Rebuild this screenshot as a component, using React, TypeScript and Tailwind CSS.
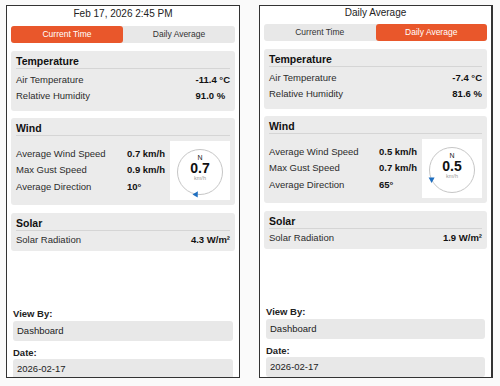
type PanelProps = {
  title: string;
  titleH: "tall" | "short";
  active: "current" | "daily";
  temp: string;
  humidity: string;
  avgSpeed: string;
  gust: string;
  direction: number;
  speed: string;
  markerRot: number;
  solar: string;
  thickRight?: boolean;
};

function Compass({ direction, speed, markerRot }: { direction: number; speed: string; markerRot: number }) {
  const cx = 30;
  const cy = 31;
  const r = 22.5;
  const p = ((direction + 180) * Math.PI) / 180;
  const mx = cx + r * Math.sin(p);
  const my = cy - r * Math.cos(p);
  return (
    <div className="w-[60px] h-[59px] bg-white ml-[5px] shrink-0">
      <svg width="60" height="59" viewBox="0 0 60 59">
        <circle cx={cx} cy={cy} r={r} fill="none" stroke="#c6c6c6" strokeWidth="1" />
        <text x="30" y="18.5" textAnchor="middle" fontSize="7" fill="#222" fontFamily="Liberation Sans, Arial, sans-serif">
          N
        </text>
        <text x="30" y="31.5" textAnchor="middle" fontSize="14" fontWeight="bold" fill="#111" fontFamily="Liberation Sans, Arial, sans-serif">
          {speed}
        </text>
        <text x="30" y="38.5" textAnchor="middle" fontSize="5.5" fill="#9a9a9a" fontFamily="Liberation Sans, Arial, sans-serif">
          km/h
        </text>
        <polygon
          points="0,-3.5 3,2 -3,2"
          fill="#1f6fc0"
          transform={`translate(${mx} ${my}) rotate(${markerRot})`}
        />
      </svg>
    </div>
  );
}

function Card({ heading, children, className }: { heading: string; children: React.ReactNode; className: string }) {
  return (
    <div className={`rounded-[3px] bg-[#ebebeb] px-[5px] pt-[4px] ${className}`}>
      <div className="h-[14px] leading-[13px] text-[10.5px] font-bold text-[#111] border-b border-[#d5d5d5]">
        {heading}
      </div>
      {children}
    </div>
  );
}

function Panel(props: PanelProps) {
  const isCurrent = props.active === "current";
  return (
    <div
      className={`w-[234px] h-[373px] bg-white border border-[#333] overflow-hidden px-[4px] ${
        props.thickRight ? "border-r-2" : ""
      }`}
    >
      <div
        className={`text-center text-[10px] text-[#222] ${
          props.titleH === "tall" ? "h-[16px] leading-[16px]" : "h-[14px] leading-[14px]"
        }`}
      >
        {props.title}
      </div>

      {/* segmented control */}
      <div className="mt-[4px] h-[17px] flex rounded-[3px] bg-[#e8e8e8] text-[8.5px]">
        <div
          className={`flex-1 flex items-center justify-center rounded-[3px] ${
            isCurrent ? "bg-[#e9572b] text-white" : "text-[#333]"
          }`}
        >
          Current Time
        </div>
        <div
          className={`flex-1 flex items-center justify-center rounded-[3px] ${
            !isCurrent ? "bg-[#e9572b] text-white" : "text-[#333]"
          }`}
        >
          Daily Average
        </div>
      </div>

      <Card heading="Temperature" className="mt-[8px] pb-[7px]">
        <div className="pt-[3px] grid grid-cols-[1fr_auto] text-[9.5px] leading-[16px]">
          <span className="text-[#2b2b2b]">Air Temperature</span>
          <span className="font-bold text-[#111]">{props.temp}</span>
          <span className="text-[#2b2b2b]">Relative Humidity</span>
          <span className="font-bold text-[#111]">{props.humidity}</span>
        </div>
      </Card>

      <Card heading="Wind" className="mt-[7px] pb-[5px]">
        <div className="pt-[5px] flex items-center">
          <div className="flex-1 grid grid-cols-[1fr_auto] text-[9.5px] leading-[16.5px]">
            <span className="text-[#2b2b2b]">Average Wind Speed</span>
            <span className="font-bold text-[#111]">{props.avgSpeed}</span>
            <span className="text-[#2b2b2b]">Max Gust Speed</span>
            <span className="font-bold text-[#111]">{props.gust}</span>
            <span className="text-[#2b2b2b]">Average Direction</span>
            <span className="font-bold text-[#111]">{props.direction}°</span>
          </div>
          <Compass direction={props.direction} speed={props.speed} markerRot={props.markerRot} />
        </div>
      </Card>

      <Card heading="Solar" className="mt-[8px] pb-[3px]">
        <div className="pt-[1px] flex justify-between text-[9.5px] leading-[16px]">
          <span className="text-[#2b2b2b]">Solar Radiation</span>
          <span className="font-bold text-[#111]">
            {props.solar} W/m²
          </span>
        </div>
      </Card>

      <div className="mt-[56px] px-[2px]">
        <div className="h-[14px] leading-[14px] text-[9.5px] font-semibold text-[#222]">View By:</div>
        <div className="h-[20px] rounded-[3px] bg-[#e8e8e8] px-[4px] flex items-center text-[9.5px] text-[#222]">
          Dashboard
        </div>
        <div className="mt-[6px] h-[12px] leading-[12px] text-[9.5px] font-semibold text-[#222]">Date:</div>
        <div className="h-[20px] rounded-[3px] bg-[#e8e8e8] px-[4px] flex items-center text-[9.5px] text-[#222]">
          2026-02-17
        </div>
      </div>
    </div>
  );
}

export default function App() {
  return (
    <div className="w-[500px] h-[386px] bg-[#fafafa] flex items-start gap-[19px] pl-[6px] pt-[5px] font-['Liberation_Sans',Arial,sans-serif]">
      <Panel
        title="Feb 17, 2026 2:45 PM"
        titleH="tall"
        active="current"
        temp="-11.4 °C"
        humidity="91.0 %"
        avgSpeed="0.7 km/h"
        gust="0.9 km/h"
        direction={10}
        speed="0.7"
        markerRot={30}
        solar="4.3"
      />
      <Panel
        title="Daily Average"
        titleH="short"
        active="daily"
        temp="-7.4 °C"
        humidity="81.6 %"
        avgSpeed="0.5 km/h"
        gust="0.7 km/h"
        direction={65}
        speed="0.5"
        markerRot={180}
        solar="1.9"
        thickRight
      />
    </div>
  );
}
